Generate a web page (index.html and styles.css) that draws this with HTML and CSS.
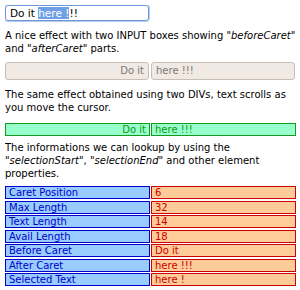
FILE: index.html
```
<!DOCTYPE html>
<html>
<head>
<meta charset="utf-8">
<link rel="stylesheet" href="styles.css">
</head>
<body>
<div class="field"><span>Do it </span><span class="sel">here !</span><span>!!</span></div>
<p class="p1">A nice effect with two INPUT boxes showing "<i>beforeCaret</i>" and "<i>afterCaret</i>" parts.</p>
<div class="pair inputs">
  <div class="ro right">Do it</div>
  <div class="ro">here !!!</div>
</div>
<p class="p2">The same effect obtained using two DIVs, text scrolls as you move the cursor.</p>
<div class="pair green">
  <div class="g right">Do it</div>
  <div class="g">here !!!</div>
</div>
<p class="p3">The informations we can lookup by using the "<i>selectionStart</i>", "<i>selectionEnd</i>" and other element properties.</p>
<div class="info">
  <div class="k">Caret Position</div><div class="v">6</div>
  <div class="k">Max Length</div><div class="v">32</div>
  <div class="k">Text Length</div><div class="v">14</div>
  <div class="k">Avail Length</div><div class="v">18</div>
  <div class="k">Before Caret</div><div class="v">Do it</div>
  <div class="k">After Caret</div><div class="v">here !!!</div>
  <div class="k">Selected Text</div><div class="v">here !</div>
</div>
</body>
</html>
```
FILE: styles.css
```
*, *::before, *::after { box-sizing: border-box; }
html, body { background: #fff; }
body {
  margin: 5px 4px 5px 5px;
  font-family: "DejaVu Sans", Verdana, sans-serif;
  font-size: 10px;
  line-height: 13px;
  color: #000;
}
.field {
  width: 144px;
  height: 16px;
  border: 1px solid #6f97d8;
  border-radius: 3px;
  box-shadow: 0 0 0 1px #b4cbee;
  padding: 0 0 0 4px;
  font-size: 10.5px;
  line-height: 14px;
  white-space: pre;
  overflow: hidden;
}
.sel { background: #6fa0e6; color: #fff; }
p { margin: 0; }
.p1 { margin-top: 8px; }
.p2 { margin-top: 8px; }
.p3 { margin-top: 5px; }
.pair {
  display: grid;
  grid-template-columns: 144px 144px;
  column-gap: 2px;
}
.inputs { margin-top: 7px; }
.ro {
  height: 18px;
  line-height: 16px;
  border: 1px solid #c8beb5;
  border-radius: 3px;
  background: #f1e9e3;
  color: #7d7975;
  padding: 0 4px;
  white-space: pre;
}
.right { text-align: right; }
.green { margin-top: 9px; grid-template-columns: 145px 145px; column-gap: 1px; }
.g {
  height: 13px;
  line-height: 11px;
  border: 1px solid #149a1e;
  background: #98ffcc;
  color: #0f9a14;
  padding: 0 3px;
}
.info {
  display: grid;
  grid-template-columns: 145px 145px;
  column-gap: 1px;
  row-gap: 1.5px;
  margin-top: 6px;
}
.k, .v {
  height: 13px;
  line-height: 11px;
  padding: 0 3px;
  border: 1px solid;
  white-space: pre;
}
.k { background: #99ccff; border-color: #0000cc; color: #0000cc; }
.v { background: #ffcc99; border-color: #cc0000; color: #cc0000; }
```
